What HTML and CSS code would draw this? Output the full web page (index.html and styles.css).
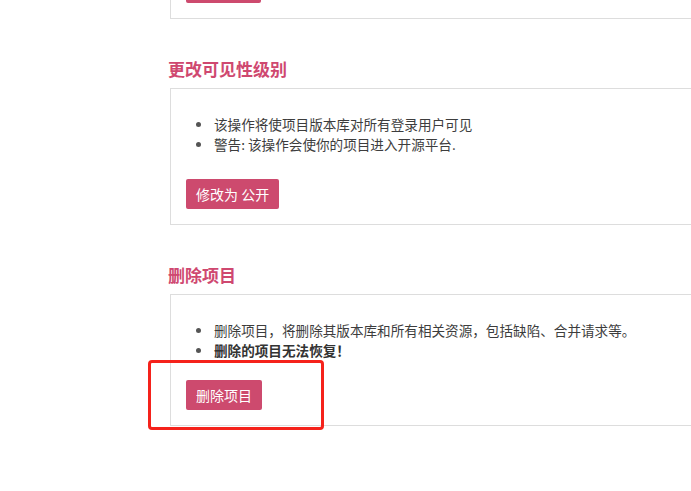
FILE: index.html
```html
<!DOCTYPE html>
<html lang="zh-CN">
<head>
<meta charset="utf-8">
<title>项目设置</title>
<link rel="stylesheet" href="styles.css">
</head>
<body>
<div class="page">
  <div class="card card--first">
    <span class="btn btn--ghost" aria-hidden="true"></span>
  </div>

  <h3 class="section-title">更改可见性级别</h3>
  <div class="card">
    <ul class="notes">
      <li>该操作将使项目版本库对所有登录用户可见</li>
      <li>警告: 该操作会使你的项目进入开源平台.</li>
    </ul>
    <button class="btn">修改为 公开</button>
  </div>

  <h3 class="section-title">删除项目</h3>
  <div class="card card--annotated">
    <ul class="notes notes--tight">
      <li>删除项目，将删除其版本库和所有相关资源，包括缺陷、合并请求等。</li>
      <li><strong>删除的项目无法恢复！</strong></li>
    </ul>
    <button class="btn">删除项目</button>
    <div class="highlight"></div>
  </div>
</div>
</body>
</html>
```

FILE: styles.css
```css
html {
  background: #ffffff;
}

body {
  margin: 0;
  padding: 0;
  min-height: 100vh;
  overflow: hidden;
  font-family: "Liberation Sans", "Noto Sans CJK SC", sans-serif;
  color: #3b3b3b;
  font-size: 14px;
}

.page {
  width: 560px;
  padding-left: 170px;
  margin-top: -43px;
  padding-bottom: 60px;
}

.card {
  border: 1px solid #dddddd;
  padding: 15px 15px 15px;
  background: #fff;
}

.card--annotated {
  position: relative;
}

.section-title {
  margin: 38px 0 7px -2px;
  font-size: 17px;
  line-height: 24px;
  font-weight: bold;
  color: #cf4870;
  font-family: "Noto Sans CJK SC", sans-serif;
}

.notes {
  margin: 10px 0 25px;
  padding-left: 28px;
  list-style: none;
  font-family: "Noto Sans CJK SC", sans-serif;
  font-size: 13.6px;
  line-height: 20px;
  color: #3d3d3d;
}

.notes li {
  position: relative;
}

.notes li::before {
  content: "";
  position: absolute;
  left: -18px;
  top: 8px;
  width: 5px;
  height: 5px;
  border-radius: 50%;
  background: #555;
}

.notes strong {
  font-weight: bold;
  color: #333;
}

.notes--tight {
  margin-bottom: 20px;
}

.btn {
  display: inline-block;
  height: 30px;
  padding: 0 10px;
  border: none;
  border-radius: 2px;
  background: #cd4a6e;
  color: #ffffff;
  font-family: "Noto Sans CJK SC", sans-serif;
  font-size: 14px;
  line-height: 30px;
  vertical-align: top;
}

.btn--ghost {
  width: 75px;
  padding: 0;
}

.highlight {
  position: absolute;
  left: -23px;
  top: 65px;
  width: 170px;
  height: 64px;
  border: 3px solid #f5221b;
  border-radius: 4px;
}
```
